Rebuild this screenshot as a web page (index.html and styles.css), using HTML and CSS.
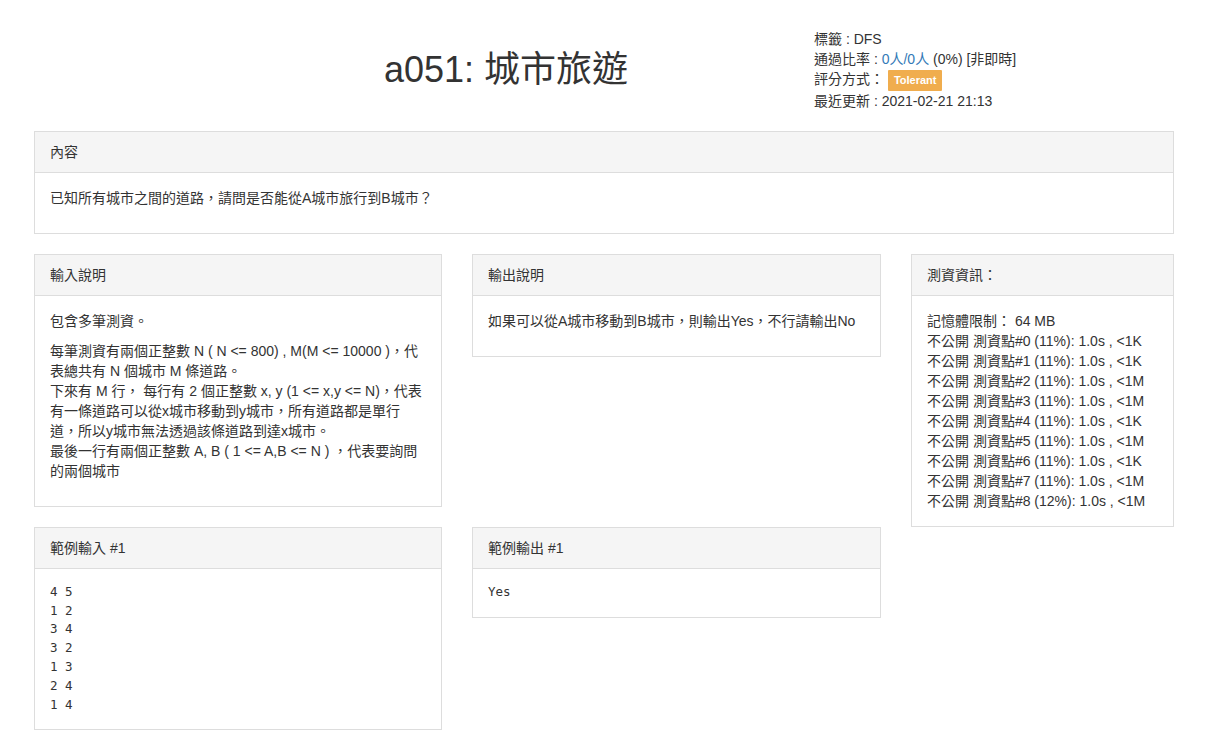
FILE: index.html
```html
<!DOCTYPE html>
<html lang="zh-Hant">
<head>
<meta charset="utf-8">
<title>a051: 城市旅遊</title>
<link rel="stylesheet" href="styles.css">
</head>
<body>
<div class="page">
  <header class="head">
    <h1 class="title">a051: 城市旅遊</h1>
    <div class="meta">
      <div class="meta-line">標籤 : DFS</div>
      <div class="meta-line">通過比率 : <span class="link">0人/0人</span> (0%) [非即時]</div>
      <div class="meta-line badge-line">評分方式： <span class="badge">Tolerant</span></div>
      <div class="meta-line">最近更新 : 2021-02-21 21:13</div>
    </div>
  </header>

  <section class="panel">
    <div class="panel-heading">內容</div>
    <div class="panel-body"><p>已知所有城市之間的道路，請問是否能從A城市旅行到B城市？</p></div>
  </section>

  <div class="main">
    <div class="left">
      <section class="panel">
        <div class="panel-heading">輸入說明</div>
        <div class="panel-body">
          <p>包含多筆測資。</p>
          <p>每筆測資有兩個正整數 N ( N &lt;= 800) , M(M &lt;= 10000 )，代表總共有 N 個城市 M 條道路。<br>下來有 M 行， 每行有 2 個正整數 x, y (1 &lt;= x,y &lt;= N)，代表有一條道路可以從x城市移動到y城市，所有道路都是單行道，所以y城市無法透過該條道路到達x城市。<br>最後一行有兩個正整數 A, B ( 1 &lt;= A,B &lt;= N ) ，代表要詢問的兩個城市</p>
        </div>
      </section>
      <section class="panel">
        <div class="panel-heading">輸出說明</div>
        <div class="panel-body"><p>如果可以從A城市移動到B城市，則輸出Yes，不行請輸出No</p></div>
      </section>
      <section class="panel">
        <div class="panel-heading">範例輸入 #1</div>
        <div class="panel-body code-body"><pre class="sample">4 5
1 2
3 4
3 2
1 3
2 4
1 4</pre></div>
      </section>
      <section class="panel">
        <div class="panel-heading">範例輸出 #1</div>
        <div class="panel-body code-body"><pre class="sample">Yes</pre></div>
      </section>
    </div>
    <div class="right">
      <section class="panel">
        <div class="panel-heading">測資資訊：</div>
        <div class="panel-body">記憶體限制： 64 MB<br>不公開 測資點#0 (11%): 1.0s , &lt;1K<br>不公開 測資點#1 (11%): 1.0s , &lt;1K<br>不公開 測資點#2 (11%): 1.0s , &lt;1M<br>不公開 測資點#3 (11%): 1.0s , &lt;1M<br>不公開 測資點#4 (11%): 1.0s , &lt;1K<br>不公開 測資點#5 (11%): 1.0s , &lt;1M<br>不公開 測資點#6 (11%): 1.0s , &lt;1K<br>不公開 測資點#7 (11%): 1.0s , &lt;1M<br>不公開 測資點#8 (12%): 1.0s , &lt;1M</div>
      </section>
    </div>
  </div>
</div>
</body>
</html>
```

FILE: styles.css
```css
html, body {
  margin: 0;
  padding: 0;
  background: #fff;
}
body {
  font-family: "Liberation Sans", "Noto Sans CJK TC", sans-serif;
  font-size: 14px;
  line-height: 20px;
  color: #333;
}
.page {
  width: 1140px;
  margin-left: 34px;
}
.head {
  display: flex;
  align-items: center;
  padding-top: 29px;
  margin-bottom: 20px;
}
.title {
  flex: 0 0 616px;
  margin: 0 0 0 164px;
  text-align: center;
  font-size: 36px;
  font-weight: 400;
  line-height: 40px;
  color: #333;
}
.meta {
  flex: 0 0 auto;
}
.meta-line {
  line-height: 20px;
}
.badge-line {
  line-height: 21px;
}
.link {
  color: #337ab7;
}
.badge {
  display: inline-block;
  padding: 5px 6px;
  background: #f0ad4e;
  color: #fff;
  font-size: 11px;
  font-weight: bold;
  line-height: 11px;
  border-radius: 1px;
  vertical-align: middle;
}
.panel {
  border: 1px solid #ddd;
  background: #fff;
  margin-bottom: 20px;
}
.panel-heading {
  background: #f5f5f5;
  border-bottom: 1px solid #ddd;
  padding: 10px 15px;
  line-height: 20px;
}
.panel-body {
  padding: 15px;
}
.panel-body p {
  margin: 0 0 10px;
}
.main {
  display: flex;
  align-items: flex-start;
  gap: 30px;
}
.left {
  flex: 0 0 847px;
  display: grid;
  grid-template-columns: 408px 409px;
  column-gap: 30px;
  align-items: start;
}
.right {
  flex: 0 0 263px;
}
.code-body {
  padding: 14px 15px 15px;
}
.sample {
  margin: 0;
  font-family: "DejaVu Sans Mono", monospace;
  font-size: 12.5px;
  line-height: 18.8px;
  color: #333;
  white-space: pre;
}
```
